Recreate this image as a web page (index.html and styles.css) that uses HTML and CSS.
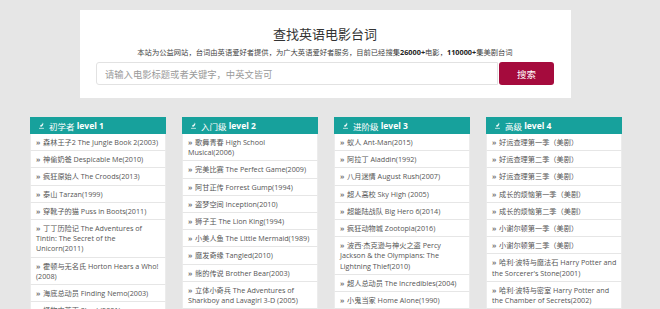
FILE: index.html
```html
<!DOCTYPE html>
<html lang="zh-CN">
<head>
<meta charset="utf-8">
<title>查找英语电影台词</title>
<link rel="stylesheet" href="styles.css">
</head>
<body>
<div class="top">
  <h1 class="title">查找英语电影台词</h1>
  <p class="sub">本站为公益网站，台词由英语爱好者提供，为广大英语爱好者服务，目前已经搜集<b>26000+</b>电影，<b>110000+</b>集美剧台词</p>
  <div class="search">
    <input class="search-input" type="text" placeholder="请输入电影标题或者关键字，中英文皆可">
    <button class="search-btn">搜索</button>
  </div>
</div>

<div class="levels">
  <div class="col">
    <div class="col-head"><svg class="ico" viewBox="0 0 10 10"><path d="M6.8 0.8 C8.6 2.6 7.4 5.8 4.2 7.2 C3.4 6.6 3 5.9 3.1 5 C4.2 4.4 5.2 3.4 5.6 2.2 C5.3 3.6 4.6 4.6 3.8 5.4 C5.6 4.4 6.8 2.8 6.8 0.8 Z" fill="#fff"/><rect x="1.5" y="8.4" width="7" height="1" fill="#fff"/></svg>初学者 <b>level 1</b></div>
    <ul class="list">
      <li><span class="arr">»</span>森林王子2 The Jungle Book 2(2003)</li>
      <li><span class="arr">»</span>神偷奶爸 Despicable Me(2010)</li>
      <li><span class="arr">»</span>疯狂原始人 The Croods(2013)</li>
      <li><span class="arr">»</span>泰山 Tarzan(1999)</li>
      <li><span class="arr">»</span>穿靴子的猫 Puss in Boots(2011)</li>
      <li><span class="arr">»</span>丁丁历险记 The Adventures of Tintin: The Secret of the Unicorn(2011)</li>
      <li><span class="arr">»</span>霍顿与无名氏 Horton Hears a Who!(2008)</li>
      <li><span class="arr">»</span>海底总动员 Finding Nemo(2003)</li>
      <li><span class="arr">»</span>怪物史莱克 Shrek(2001)</li>
    </ul>
  </div>
  <div class="col">
    <div class="col-head"><svg class="ico" viewBox="0 0 10 10"><path d="M6.8 0.8 C8.6 2.6 7.4 5.8 4.2 7.2 C3.4 6.6 3 5.9 3.1 5 C4.2 4.4 5.2 3.4 5.6 2.2 C5.3 3.6 4.6 4.6 3.8 5.4 C5.6 4.4 6.8 2.8 6.8 0.8 Z" fill="#fff"/><rect x="1.5" y="8.4" width="7" height="1" fill="#fff"/></svg>入门级 <b>level 2</b></div>
    <ul class="list">
      <li><span class="arr">»</span>歌舞青春 High School Musical(2006)</li>
      <li><span class="arr">»</span>完美比赛 The Perfect Game(2009)</li>
      <li><span class="arr">»</span>阿甘正传 Forrest Gump(1994)</li>
      <li><span class="arr">»</span>盗梦空间 Inception(2010)</li>
      <li><span class="arr">»</span>狮子王 The Lion King(1994)</li>
      <li><span class="arr">»</span>小美人鱼 The Little Mermaid(1989)</li>
      <li><span class="arr">»</span>魔发奇缘 Tangled(2010)</li>
      <li><span class="arr">»</span>熊的传说 Brother Bear(2003)</li>
      <li><span class="arr">»</span>立体小奇兵 The Adventures of Sharkboy and Lavagirl 3-D (2005)</li>
    </ul>
  </div>
  <div class="col">
    <div class="col-head"><svg class="ico" viewBox="0 0 10 10"><path d="M6.8 0.8 C8.6 2.6 7.4 5.8 4.2 7.2 C3.4 6.6 3 5.9 3.1 5 C4.2 4.4 5.2 3.4 5.6 2.2 C5.3 3.6 4.6 4.6 3.8 5.4 C5.6 4.4 6.8 2.8 6.8 0.8 Z" fill="#fff"/><rect x="1.5" y="8.4" width="7" height="1" fill="#fff"/></svg>进阶级 <b>level 3</b></div>
    <ul class="list">
      <li><span class="arr">»</span>蚁人 Ant-Man(2015)</li>
      <li><span class="arr">»</span>阿拉丁 Aladdin(1992)</li>
      <li><span class="arr">»</span>八月迷情 August Rush(2007)</li>
      <li><span class="arr">»</span>超人高校 Sky High (2005)</li>
      <li><span class="arr">»</span>超能陆战队 Big Hero 6(2014)</li>
      <li><span class="arr">»</span>疯狂动物城 Zootopia(2016)</li>
      <li><span class="arr">»</span>波西·杰克逊与神火之盗 Percy Jackson &amp; the Olympians: The Lightning Thief(2010)</li>
      <li><span class="arr">»</span>超人总动员 The Incredibles(2004)</li>
      <li><span class="arr">»</span>小鬼当家 Home Alone(1990)</li>
    </ul>
  </div>
  <div class="col">
    <div class="col-head"><svg class="ico" viewBox="0 0 10 10"><path d="M6.8 0.8 C8.6 2.6 7.4 5.8 4.2 7.2 C3.4 6.6 3 5.9 3.1 5 C4.2 4.4 5.2 3.4 5.6 2.2 C5.3 3.6 4.6 4.6 3.8 5.4 C5.6 4.4 6.8 2.8 6.8 0.8 Z" fill="#fff"/><rect x="1.5" y="8.4" width="7" height="1" fill="#fff"/></svg>高级 <b>level 4</b></div>
    <ul class="list">
      <li><span class="arr">»</span>好运查理第一季（美剧）</li>
      <li><span class="arr">»</span>好运查理第二季（美剧）</li>
      <li><span class="arr">»</span>好运查理第三季（美剧）</li>
      <li><span class="arr">»</span>成长的烦恼第一季（美剧）</li>
      <li><span class="arr">»</span>成长的烦恼第二季（美剧）</li>
      <li><span class="arr">»</span>小谢尔顿第一季（美剧）</li>
      <li><span class="arr">»</span>小谢尔顿第二季（美剧）</li>
      <li><span class="arr">»</span>哈利·波特与魔法石 Harry Potter and the Sorcerer's Stone(2001)</li>
      <li><span class="arr">»</span>哈利·波特与密室 Harry Potter and the Chamber of Secrets(2002)</li>
    </ul>
  </div>
</div>
</body>
</html>
```
FILE: styles.css
```css
html, body {
  margin: 0;
  padding: 0;
}
body {
  background: #e6e6e6;
  font-family: "Open Sans", "Noto Sans CJK SC", sans-serif;
  color: #333;
}
.top {
  margin: 10px 0 0 80px;
  width: 491px;
  height: 88px;
  box-sizing: border-box;
  padding: 16px 17px 0 16px;
  background: #fff;
}
.title {
  margin: 0;
  font-size: 13px;
  line-height: 16px;
  font-weight: normal;
  text-align: center;
  color: #333;
  font-family: "Noto Sans CJK SC", sans-serif;
}
.sub {
  margin: 5px 0 0;
  font-size: 7.3px;
  line-height: 10px;
  text-align: center;
  color: #444;
  white-space: nowrap;
}
.sub b {
  color: #222;
}
.search {
  display: flex;
  align-items: flex-start;
  margin-top: 5px;
}
.search-input {
  flex: 1;
  height: 23px;
  box-sizing: border-box;
  margin: 0;
  border: 1px solid #e2e2e2;
  border-radius: 3px 0 0 3px;
  padding: 0 8px;
  font-size: 9.3px;
  font-family: "Noto Sans CJK SC", sans-serif;
  outline: none;
}
.search-input::placeholder {
  color: #9a9a9a;
}
.search-btn {
  width: 55px;
  height: 23px;
  margin: 0 0 0 1px;
  border: none;
  border-radius: 3px;
  background: #a50b3d;
  color: #fff;
  font-size: 9.5px;
  font-family: "Noto Sans CJK SC", sans-serif;
  padding: 0;
}
.levels {
  display: grid;
  grid-template-columns: repeat(4, 136px);
  column-gap: 16px;
  margin: 19px 0 0 30px;
  align-items: start;
}
.col-head {
  display: flex;
  align-items: center;
  height: 17px;
  padding-left: 8px;
  background: #17a19c;
  color: #fff;
  font-size: 8.5px;
  white-space: pre;
}
.col-head b {
  font-weight: 700;
}
.ico {
  width: 7px;
  height: 7px;
  margin-right: 4px;
}
.list {
  list-style: none;
  margin: 0;
  padding: 0;
  background: #fff;
}
.list li {
  padding: 3px 4px 3px 5px;
  font-size: 7.2px;
  line-height: 10.2px;
  color: #555;
  border-bottom: 1px solid #e6e6e6;
  border-left: 1px solid #ececec;
  border-right: 1px solid #ececec;
}
.arr {
  display: inline-block;
  width: 7px;
  color: #777;
  font-weight: 700;
}
```
